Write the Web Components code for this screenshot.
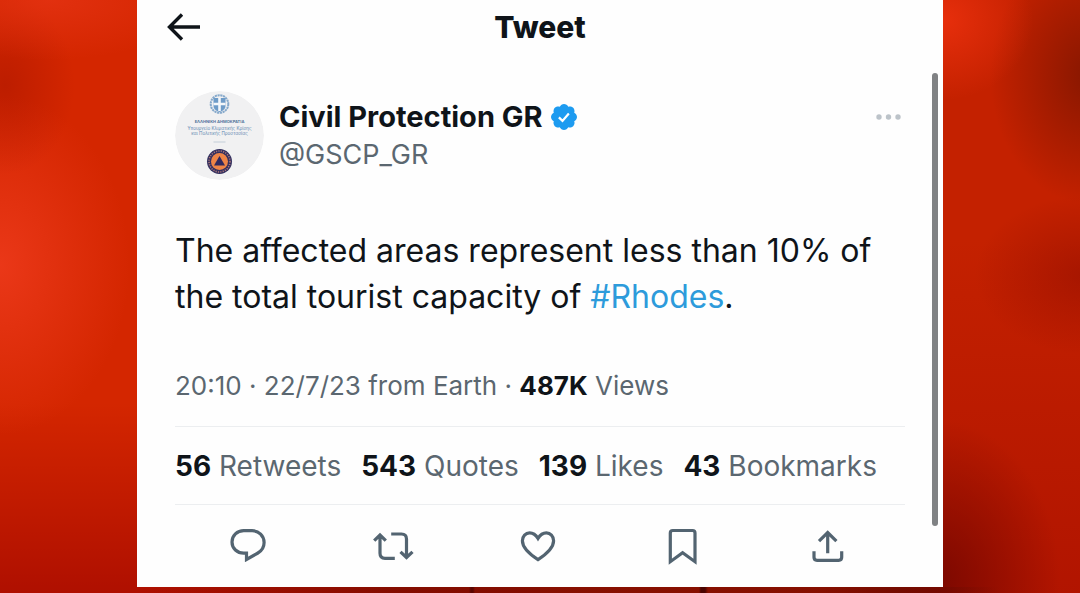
<!DOCTYPE html>
<html lang="en">
<head>
<meta charset="utf-8">
<meta name="viewport" content="width=device-width, initial-scale=1">
<title>Tweet</title>
<style>
body {
    margin: 0;
    min-height: 100vh;
    box-sizing: border-box;
    padding: 0 137px 6px;
    font-family: Inter, "Liberation Sans", sans-serif;
    color: #0f1419;
    background:
        linear-gradient(90deg, transparent 469px, #5a0500 471px 473px, transparent 475px 699px, #4a0400 701px 705px, transparent 708px) bottom / 100% 6px no-repeat,
        linear-gradient(90deg, transparent 137px, rgba(90, 10, 0, .5) 400px 900px, transparent 1000px) bottom / 100% 6px no-repeat,
        radial-gradient(150px 60px at 50px 0, rgba(235, 55, 25, .6), transparent),
        radial-gradient(70px 90px at 5px 85px, rgba(165, 20, 0, .5), transparent),
        radial-gradient(130px 170px at 0 265px, rgba(240, 60, 30, .8), transparent),
        radial-gradient(90px 80px at 943px 20px, rgba(240, 50, 15, .8), transparent),
        radial-gradient(100px 130px at 1090px 75px, rgba(120, 20, 0, .8), transparent),
        radial-gradient(110px 80px at 1085px 275px, rgba(140, 12, 0, .5), transparent),
        radial-gradient(120px 160px at 940px 580px, rgba(90, 0, 0, .6), transparent),
        linear-gradient(180deg, transparent 68%, rgba(150, 0, 0, .6)) left / 50% 100% no-repeat,
        linear-gradient(180deg, transparent 40%, rgba(165, 12, 0, .6)) right / 50% 100% no-repeat,
        linear-gradient(90deg, #d42600, #d42600 137px, #c42100 943px);
}
</style>
</head>
<body>

<tweet-page heading="Tweet">
    <tweet-author name="Civil Protection GR" handle="@GSCP_GR"></tweet-author>
    <tweet-text>The affected areas represent less than 10% of the total tourist capacity of <a href="#Rhodes">#Rhodes</a>.</tweet-text>
    <tweet-meta>20:10 · 22/7/23 from Earth · <b>487K</b> Views</tweet-meta>
    <tweet-stats>
        <tweet-stat value="56">Retweets</tweet-stat>
        <tweet-stat value="543">Quotes</tweet-stat>
        <tweet-stat value="139">Likes</tweet-stat>
        <tweet-stat value="43">Bookmarks</tweet-stat>
    </tweet-stats>
    <tweet-actions></tweet-actions>
</tweet-page>

<script>
const render = (el, html) => {
    const template = document.createElement('template');
    template.innerHTML = html;
    el.attachShadow({ mode: 'open' }).appendChild(template.content.cloneNode(true));
};

const buttonReset = `
button {
    display: flex;
    padding: 0;
    border: 0;
    background: none;
    color: inherit;
    cursor: pointer;
}
`;

class TweetPage extends HTMLElement {
    constructor() {
        super();
        render(this, `
<style>
:host {
    display: grid;
    grid-template-columns: 1fr 6px;
    column-gap: 27px;
    padding: 0 5px 0 38px;
    min-height: calc(100vh - 6px);
    box-sizing: border-box;
    background: #fefefe;
}

header {
    display: grid;
    grid-template-columns: 1fr auto 1fr;
    align-items: center;
    height: 54px;
    margin: 0 -8px 37px;
}

h1 {
    margin: 0;
    font-size: 30px;
    line-height: 38px;
    font-weight: 800;
}

.rail {
    margin: 73px 0 61px;
    border-radius: 3px;
    background: #808284;
}
${buttonReset}
</style>
<main>
    <header>
        <button aria-label="Back">
            <svg width="33" height="28" viewBox="0 0 33 28" fill="none" stroke="currentColor" stroke-width="3.4">
                <path d="M15 1.5 2.5 14 15 26.5M2.5 14H33"/>
            </svg>
        </button>
        <h1></h1>
    </header>
    <slot></slot>
</main>
<div class="rail"></div>
`);
    }

    connectedCallback() {
        this.shadowRoot.querySelector('h1').textContent = this.getAttribute('heading');
    }
}

class TweetAvatar extends HTMLElement {
    constructor() {
        super();
        render(this, `
<style>
:host {
    display: block;
    flex: none;
}

svg {
    display: block;
    border-radius: 50%;
}
</style>
<svg width="89" height="89" viewBox="0 0 89 89" font-family="Inter, sans-serif" text-anchor="middle">
    <circle cx="44.500" cy="44.500" r="44.500" fill="#f1f1f2"/>
    <!-- national emblem -->
    <circle cx="44.500" cy="13" r="8.800" fill="none" stroke="#86a9cb" stroke-width="2" stroke-dasharray="2.200 .6"/>
    <path d="M38.500 7h12v8q0 4-6 6-6-2-6-6z" fill="#6f9cc8"/>
    <path d="M44.500 7v13M38.500 13h12" stroke="#f4f7fa" stroke-width="2.600"/>
    <text x="44.500" y="32" font-size="4" font-weight="700" fill="#51749a">ΕΛΛΗΝΙΚΗ ΔΗΜΟΚΡΑΤΙΑ</text>
    <text x="44.500" y="39" font-size="4.500" fill="#5f87b0">Υπουργείο Κλιματικής Κρίσης</text>
    <text x="44.500" y="44" font-size="4.500" fill="#5f87b0">και Πολιτικής Προστασίας</text>
    <path d="M38.500 51h12" stroke="#c3ced8" stroke-width="1"/>
    <!-- civil protection badge -->
    <circle cx="44.500" cy="70.500" r="12.500" fill="#33305f"/>
    <circle cx="44.500" cy="70.500" r="10.500" fill="none" stroke="#a9757a" stroke-width="1.600" stroke-dasharray="1.200 1.200"/>
    <circle cx="44.500" cy="70.500" r="8.500" fill="#ee8447"/>
    <path d="M44.500 65l5.500 9.500H39z" fill="#30295f"/>
</svg>
`);
    }
}

class TweetAuthor extends HTMLElement {
    constructor() {
        super();
        render(this, `
<style>
:host {
    display: flex;
    align-items: center;
    gap: 15px;
    height: 89px;
    line-height: 38px;
}

.author__inf {
    flex: 1;
}

.author__name {
    display: flex;
    align-items: center;
    gap: 8px;
    font-size: 29px;
    font-weight: 700;
}

.author__handle {
    font-size: 27px;
    color: #5b6770;
}

.author__more {
    align-self: flex-start;
    margin: 22px 4px 0 0;
    color: #bcc3c9;
}
${buttonReset}
</style>
<tweet-avatar></tweet-avatar>
<div class="author__inf">
    <div class="author__name">
        <span></span>
        <svg width="26" height="26" viewBox="1.600 1.600 18.800 18.800" role="img" aria-label="Verified">
            <path fill="#1d9bf0" d="M20.396 11c-.018-.646-.215-1.275-.57-1.816-.354-.54-.852-.972-1.438-1.246.223-.607.27-1.264.14-1.897-.131-.634-.437-1.218-.882-1.687-.47-.445-1.053-.75-1.687-.882-.633-.13-1.29-.083-1.897.14-.273-.587-.704-1.086-1.245-1.44S11.647 1.62 11 1.604c-.646.017-1.273.213-1.813.568s-.969.854-1.24 1.44c-.608-.223-1.267-.272-1.902-.14-.635.13-1.22.436-1.69.882-.445.47-.749 1.055-.878 1.688-.13.633-.08 1.29.144 1.896-.587.274-1.087.705-1.443 1.245-.356.54-.555 1.17-.574 1.817.02.647.218 1.276.574 1.817.356.54.856.972 1.443 1.245-.224.606-.274 1.263-.144 1.896.13.634.433 1.218.877 1.688.47.443 1.054.747 1.687.878.633.132 1.29.084 1.897-.136.274.586.705 1.084 1.246 1.439.54.354 1.17.551 1.816.569.647-.016 1.276-.213 1.817-.567s.972-.854 1.245-1.44c.604.239 1.266.296 1.903.164.636-.132 1.22-.447 1.68-.907.46-.46.776-1.044.908-1.681s.075-1.299-.165-1.903c.586-.274 1.084-.705 1.439-1.246.354-.54.551-1.17.569-1.816z"/>
            <path fill="none" stroke="#fff" stroke-width="1.600" d="M7.300 11.300l2.600 2.500 4.600-5.300"/>
        </svg>
    </div>
    <div class="author__handle"></div>
</div>
<button class="author__more" aria-label="More">
    <svg width="26" height="8" viewBox="0 0 26 8" fill="currentColor">
        <circle cx="4" cy="4" r="2.700"/><circle cx="13.500" cy="4" r="2.700"/><circle cx="23" cy="4" r="2.700"/>
    </svg>
</button>
`);
    }

    connectedCallback() {
        this.shadowRoot.querySelector('.author__name span').textContent = this.getAttribute('name');
        this.shadowRoot.querySelector('.author__handle').textContent = this.getAttribute('handle');
    }
}

class TweetText extends HTMLElement {
    constructor() {
        super();
        render(this, `
<style>
:host {
    display: block;
    margin-top: 48px;
    font-size: 32px;
    line-height: 46px;
}

::slotted(a) {
    color: #2d9bdb;
    text-decoration: none;
}
</style>
<slot></slot>
`);
    }
}

class TweetMeta extends HTMLElement {
    constructor() {
        super();
        render(this, `
<style>
:host {
    display: block;
    margin-top: 47px;
    padding-bottom: 21px;
    border-bottom: 1px solid #eceef0;
    font-size: 26px;
    line-height: 38px;
    color: #5b6770;
}

::slotted(b) {
    font-weight: 700;
    color: #0f1419;
}
</style>
<slot></slot>
`);
    }
}

class TweetStats extends HTMLElement {
    constructor() {
        super();
        render(this, `
<style>
:host {
    display: flex;
    gap: 20px;
    padding: 20px 0 19px;
    border-bottom: 1px solid #eceef0;
    font-size: 28px;
    line-height: 38px;
}
</style>
<slot></slot>
`);
    }
}

class TweetStat extends HTMLElement {
    constructor() {
        super();
        render(this, `
<style>
:host {
    display: block;
    white-space: nowrap;
    color: #5b6770;
}

b {
    font-weight: 700;
    color: #0f1419;
}
</style>
<b></b> <slot></slot>
`);
    }

    connectedCallback() {
        this.shadowRoot.querySelector('b').textContent = this.getAttribute('value');
    }
}

const icons = {
    Reply: '<path d="M15.700 4.700h8.400c6.700 0 12 5.200 12 11.900 0 4.600-2.500 8.300-6.200 10.400L18.500 33.500v-6.300h-2.800C9.200 27.200 4 22.500 4 16S9.200 4.700 15.700 4.700z"/>',
    Retweet: '<path d="M1.200 14.700 7 9l5.800 5.700M7 9v18.300q0 5 5 5h9.800M18.200 8h10.300q5 0 5 5v18.500M27.500 25.800l6 5.700 6-5.700"/>',
    Like: '<path d="M20 33.600C10.500 27.500 4.400 21.500 4.400 14.800 4.400 10 7.700 6.900 11.600 6.900c3.600 0 6.200 1.900 8.400 5.500 2.200-3.600 4.800-5.500 8.400-5.500 3.900 0 7.200 3.100 7.200 7.900 0 6.700-6.100 12.700-15.600 18.800z"/>',
    Bookmark: '<path d="M7.300 35.700V7q0-2.500 2.500-2.500h19.700q2.500 0 2.500 2.500v28.700l-12.400-8.900z"/>',
    Share: '<path d="M19.700 27.300V7M11 15.200 19.700 6.600l8.700 8.600M6 25.300v6q0 3 3 3h21.700q3 0 3-3v-6"/>',
};

class TweetActions extends HTMLElement {
    constructor() {
        super();
        render(this, `
<style>
:host {
    display: grid;
    grid-template-columns: repeat(5, 1fr);
    justify-items: center;
    padding: 21px 5px 20px 0;
    color: #536471;
}
${buttonReset}

svg {
    overflow: visible;
}
</style>
${Object.entries(icons).map(([label, path]) => `
<button aria-label="${label}">
    <svg width="40" height="40" viewBox="0 0 40 40" fill="none" stroke="currentColor" stroke-width="3.200">${path}</svg>
</button>`).join('')}
`);
    }
}

customElements.define('tweet-page', TweetPage);
customElements.define('tweet-avatar', TweetAvatar);
customElements.define('tweet-author', TweetAuthor);
customElements.define('tweet-text', TweetText);
customElements.define('tweet-meta', TweetMeta);
customElements.define('tweet-stats', TweetStats);
customElements.define('tweet-stat', TweetStat);
customElements.define('tweet-actions', TweetActions);
</script>
</body>
</html>
